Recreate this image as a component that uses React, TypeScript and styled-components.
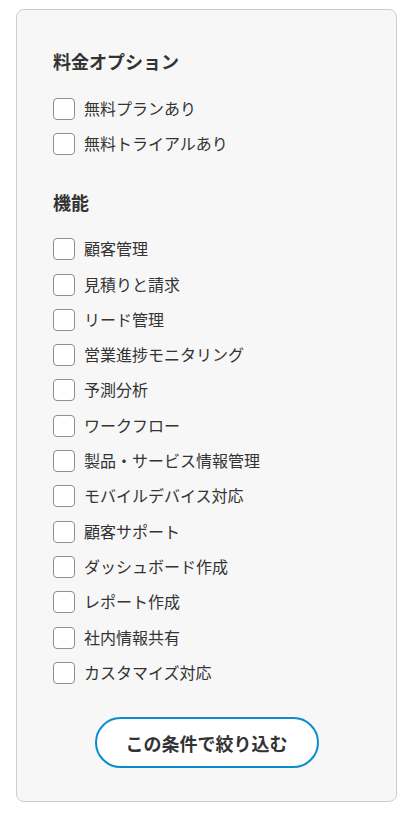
import React, { useState } from 'react';
import styled, { createGlobalStyle } from 'styled-components';

const GlobalStyle = createGlobalStyle`
  body {
    margin: 0;
    background: #ffffff;
    font-family: "Noto Sans CJK JP", "Noto Sans", sans-serif;
    color: #333333;
  }
`;

const Panel = styled.div`
  margin: 9px 15px 16px 16px;
  padding: 38px 36px 33px;
  background-color: #f7f7f7;
  border: 1px solid #cccccc;
  border-radius: 8px;
`;

const Section = styled.section<{ $gapTop?: boolean }>`
  margin-top: ${({ $gapTop }) => ($gapTop ? '28px' : '0')};
`;

const Heading = styled.h3`
  margin: 0 0 15px;
  font-size: 18px;
  font-weight: 700;
  line-height: 27px;
  color: #333333;
`;

const List = styled.ul`
  list-style: none;
  margin: 0;
  padding: 0;
`;

const Row = styled.li`
  display: flex;
  align-items: center;
  height: 35.3px;
`;

const Label = styled.label`
  display: flex;
  align-items: center;
  gap: 9px;
  cursor: pointer;
  font-size: 16px;
  color: #333333;
`;

const Box = styled.span<{ $checked: boolean }>`
  width: 22px;
  height: 22px;
  margin-top: 2px;
  box-sizing: border-box;
  border: 1px solid #8f8f8f;
  border-radius: 4px;
  background-color: ${({ $checked }) => ($checked ? '#0088cc' : '#ffffff')};
  display: flex;
  align-items: center;
  justify-content: center;
`;

const HiddenInput = styled.input`
  display: none;
`;

const ButtonRow = styled.div`
  display: flex;
  justify-content: center;
  margin-top: 28px;
`;

const SubmitButton = styled.button`
  width: 224px;
  height: 51px;
  border: 2px solid #0a8ccf;
  border-radius: 26px;
  background-color: #ffffff;
  font-family: "Noto Sans CJK JP", "Noto Sans", sans-serif;
  font-size: 18px;
  font-weight: 700;
  color: #333333;
  cursor: pointer;
`;

const priceOptions = ['無料プランあり', '無料トライアルあり'];

const features = [
  '顧客管理',
  '見積りと請求',
  'リード管理',
  '営業進捗モニタリング',
  '予測分析',
  'ワークフロー',
  '製品・サービス情報管理',
  'モバイルデバイス対応',
  '顧客サポート',
  'ダッシュボード作成',
  'レポート作成',
  '社内情報共有',
  'カスタマイズ対応',
];

const CheckItem: React.FC<{ label: string }> = ({ label }) => {
  const [checked, setChecked] = useState(false);
  return (
    <Row>
      <Label>
        <HiddenInput type="checkbox" checked={checked} onChange={() => setChecked(!checked)} />
        <Box $checked={checked}>
          {checked && (
            <svg width="14" height="14" viewBox="0 0 14 14">
              <path d="M2 7.5l3 3 7-7" stroke="#fff" strokeWidth="2" fill="none" />
            </svg>
          )}
        </Box>
        {label}
      </Label>
    </Row>
  );
};

const App: React.FC = () => {
  return (
    <>
      <GlobalStyle />
      <Panel>
        <Section>
          <Heading>料金オプション</Heading>
          <List>
            {priceOptions.map((item) => (
              <CheckItem key={item} label={item} />
            ))}
          </List>
        </Section>
        <Section $gapTop>
          <Heading>機能</Heading>
          <List>
            {features.map((item) => (
              <CheckItem key={item} label={item} />
            ))}
          </List>
        </Section>
        <ButtonRow>
          <SubmitButton>この条件で絞り込む</SubmitButton>
        </ButtonRow>
      </Panel>
    </>
  );
};

export default App;
